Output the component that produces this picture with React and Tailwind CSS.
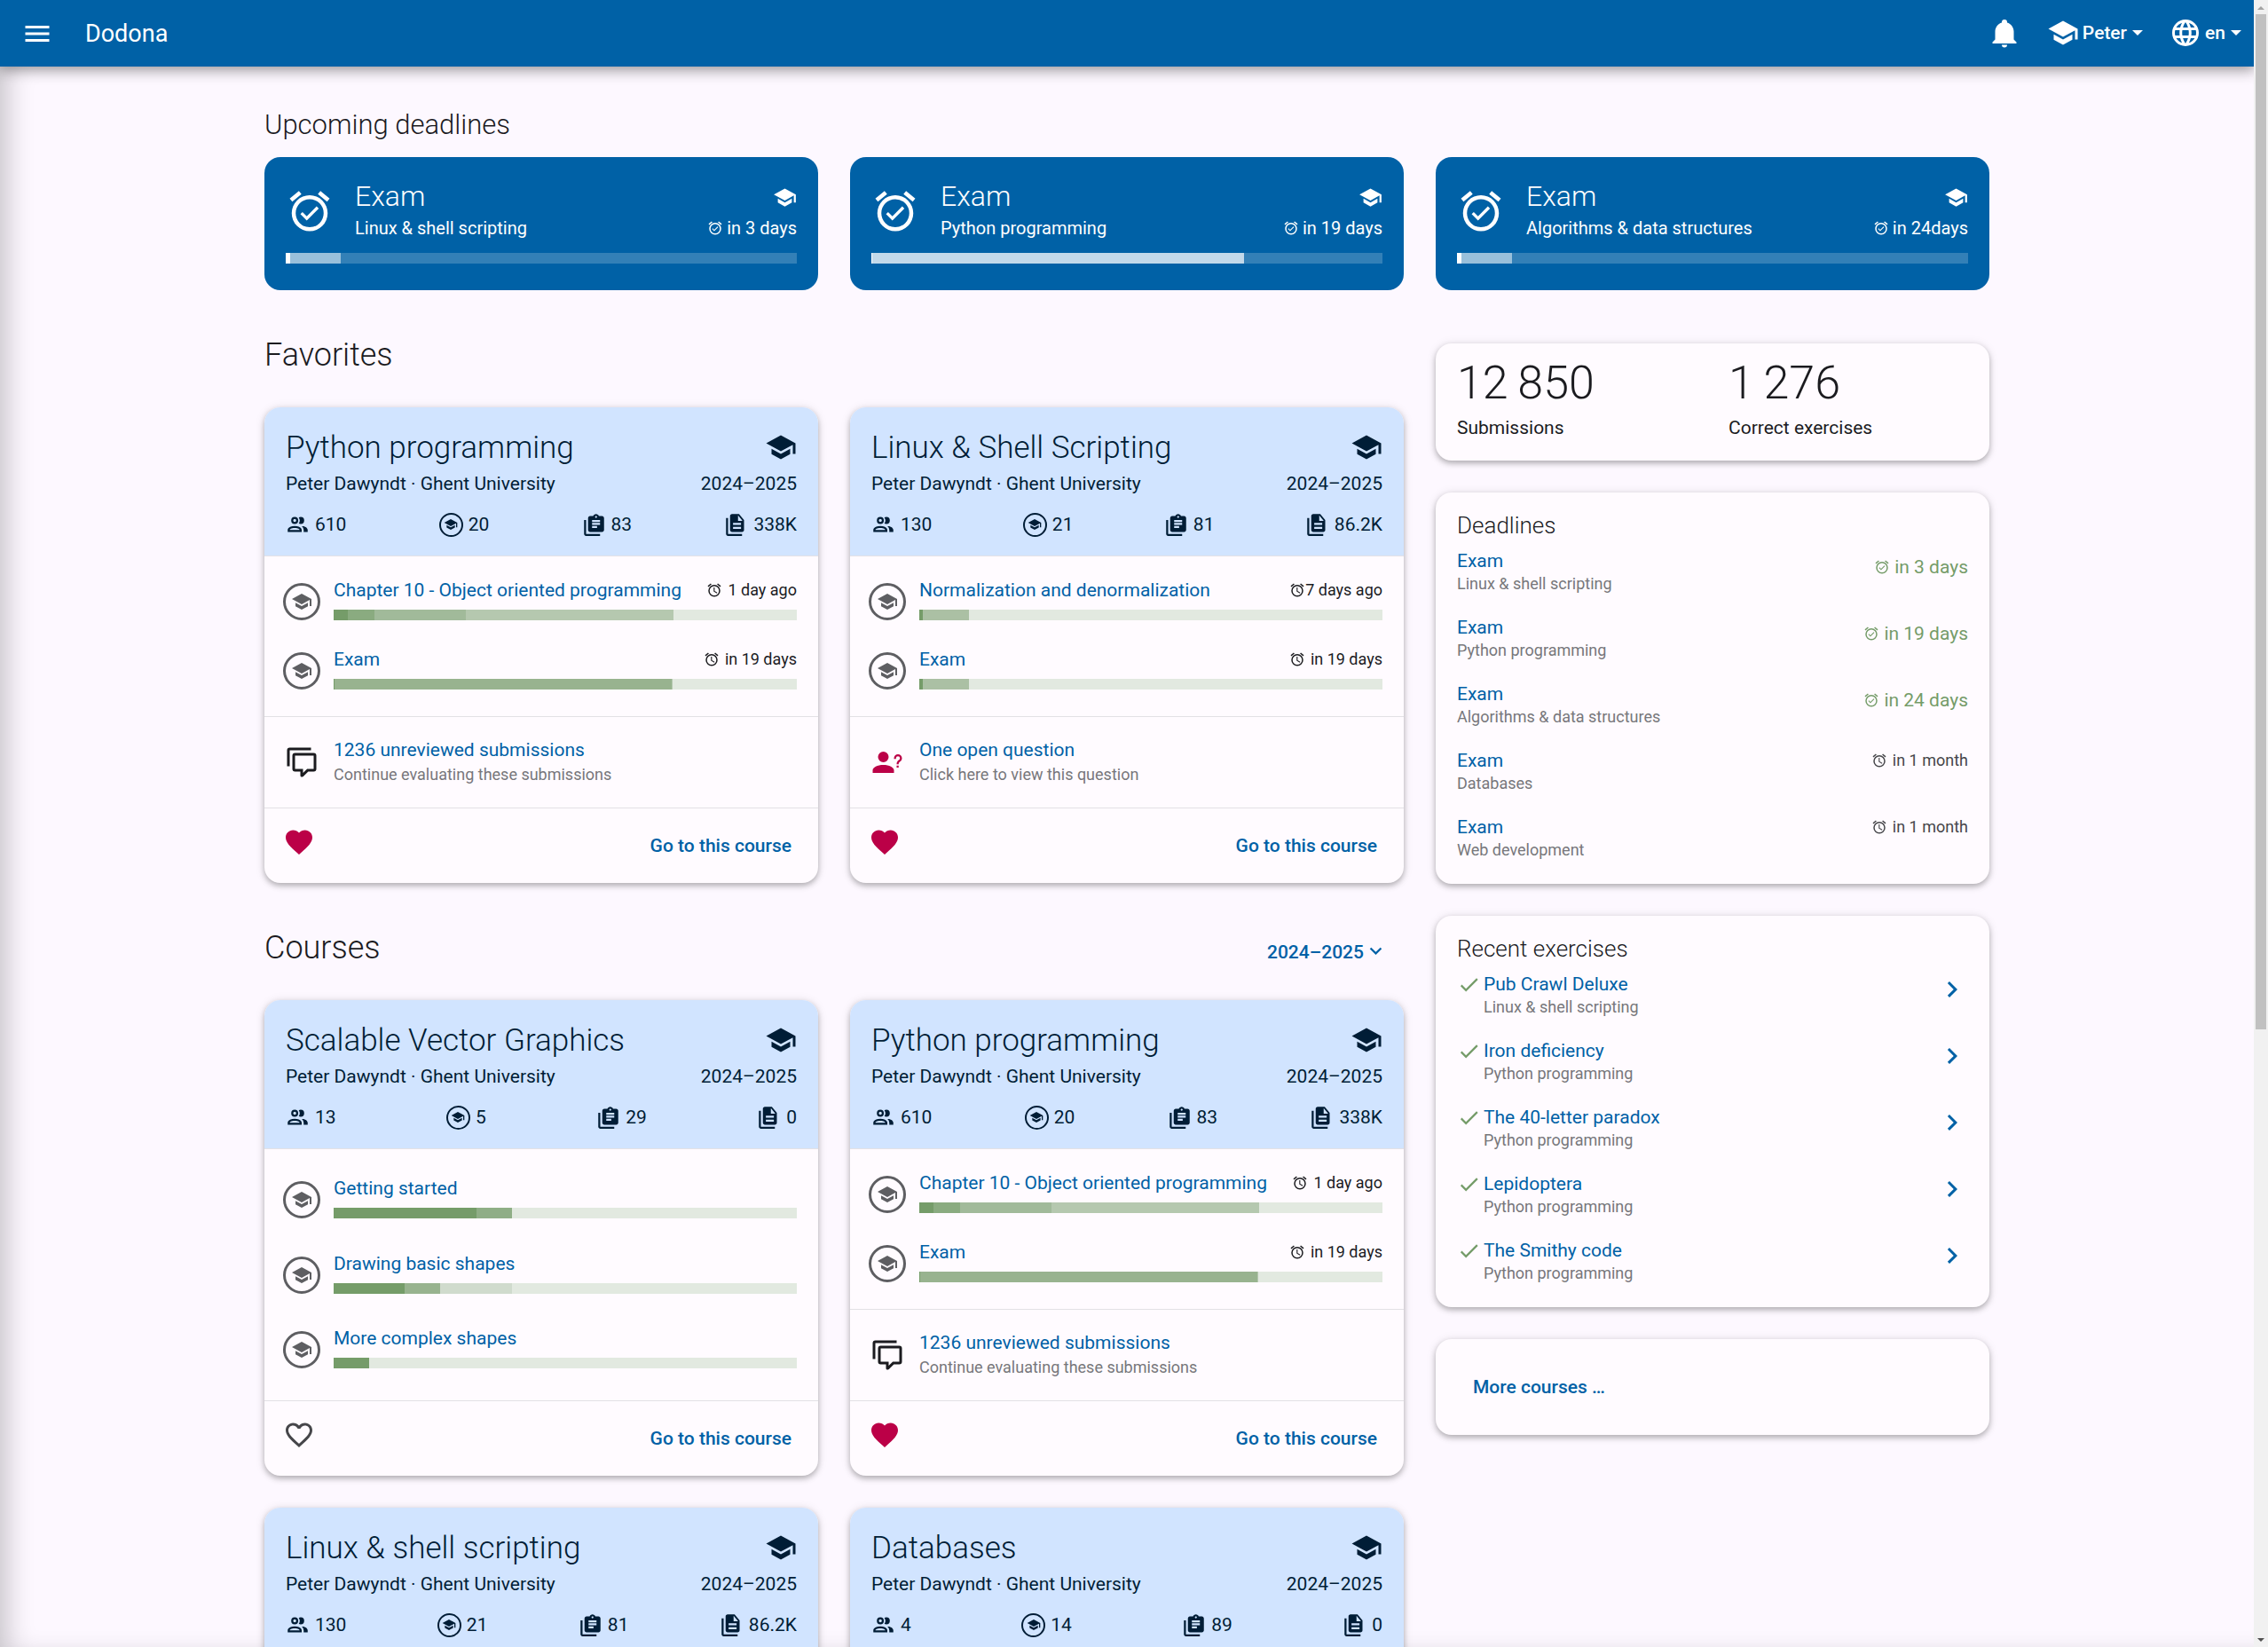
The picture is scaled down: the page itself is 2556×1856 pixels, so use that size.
import { useState } from 'react'
import clsx from 'clsx'

const ICONS = {
  menu: 'M3,6H21V8H3V6M3,11H21V13H3V11M3,16H21V18H3V16Z',
  school: 'M12,3L1,9L12,15L21,10.09V17H23V9M5,13.18V17.18L12,21L19,17.18V13.18L12,17L5,13.18Z',
  bell: 'M21,19V20H3V19L5,17V11C5,7.9 7.03,5.17 10,4.29C10,4.19 10,4.1 10,4A2,2 0 0,1 12,2A2,2 0 0,1 14,4C14,4.1 14,4.19 14,4.29C16.97,5.17 19,7.9 19,11V17L21,19M14,21A2,2 0 0,1 12,23A2,2 0 0,1 10,21',
  web: 'M16.36,14C16.44,13.34 16.5,12.68 16.5,12C16.5,11.32 16.44,10.66 16.36,10H19.74C19.9,10.64 20,11.31 20,12C20,12.69 19.9,13.36 19.74,14M14.59,19.56C15.19,18.45 15.65,17.25 15.97,16H18.92C17.96,17.65 16.43,18.93 14.59,19.56M14.34,14H9.66C9.56,13.34 9.5,12.68 9.5,12C9.5,11.32 9.56,10.65 9.66,10H14.34C14.43,10.65 14.5,11.32 14.5,12C14.5,12.68 14.43,13.34 14.34,14M12,19.96C11.17,18.76 10.5,17.43 10.09,16H13.91C13.5,17.43 12.83,18.76 12,19.96M8,8H5.08C6.03,6.34 7.57,5.06 9.4,4.44C8.8,5.55 8.35,6.75 8,8M5.08,16H8C8.35,17.25 8.8,18.45 9.4,19.56C7.57,18.93 6.03,17.65 5.08,16M4.26,14C4.1,13.36 4,12.69 4,12C4,11.31 4.1,10.64 4.26,10H7.64C7.56,10.66 7.5,11.32 7.5,12C7.5,12.68 7.56,13.34 7.64,14M12,4.03C12.83,5.23 13.5,6.57 13.91,8H10.09C10.5,6.57 11.17,5.23 12,4.03M18.92,8H15.97C15.65,6.75 15.19,5.55 14.59,4.44C16.43,5.07 17.96,6.34 18.92,8M12,2C6.47,2 2,6.5 2,12A10,10 0 0,0 12,22A10,10 0 0,0 22,12A10,10 0 0,0 12,2Z',
  alarm: 'M12,20A7,7 0 0,1 5,13A7,7 0 0,1 12,6A7,7 0 0,1 19,13A7,7 0 0,1 12,20M12,4A9,9 0 0,0 3,13A9,9 0 0,0 12,22A9,9 0 0,0 21,13A9,9 0 0,0 12,4M12.5,8H11V14L15.75,16.85L16.5,15.62L12.5,13.25V8M7.88,3.39L6.6,1.86L2,5.71L3.29,7.24L7.88,3.39M22,5.72L17.4,1.86L16.11,3.39L20.71,7.25L22,5.72Z',
  alarmCheck: 'M10.54,14.53L8.41,12.4L7.35,13.46L10.53,16.64L16.53,10.64L15.47,9.58L10.54,14.53M12,20A7,7 0 0,1 5,13A7,7 0 0,1 12,6A7,7 0 0,1 19,13A7,7 0 0,1 12,20M12,4A9,9 0 0,0 3,13A9,9 0 0,0 12,22A9,9 0 0,0 21,13A9,9 0 0,0 12,4M7.88,3.39L6.6,1.86L2,5.71L3.29,7.24L7.88,3.39M22,5.72L17.4,1.86L16.11,3.39L20.71,7.25L22,5.72Z',
  users: 'M13.07 10.41A5 5 0 0 0 13.07 4.59A3.39 3.39 0 0 1 15 4A3.5 3.5 0 0 1 15 11A3.39 3.39 0 0 1 13.07 10.41M5.5 7.5A3.5 3.5 0 1 1 9 11A3.5 3.5 0 0 1 5.5 7.5M7.5 7.5A1.5 1.5 0 1 0 9 6A1.5 1.5 0 0 0 7.5 7.5M16 17V19H2V17S2 13 9 13 16 17 16 17M14 17C13.86 16.22 12.67 15 9 15S4.07 16.31 4 17M15.95 13A5.32 5.32 0 0 1 18 17V19H22V17S22 13.37 15.94 13Z',
  exercises: 'M4 7V21H18V23H4C2.9 23 2 22.1 2 21V7H4M20 3C21.1 3 22 3.9 22 5V17C22 18.1 21.1 19 20 19H8C6.9 19 6 18.1 6 17V5C6 3.9 6.9 3 8 3H11.18C11.6 1.84 12.7 1 14 1C15.3 1 16.4 1.84 16.82 3H20M14 3C13.45 3 13 3.45 13 4C13 4.55 13.45 5 14 5C14.55 5 15 4.55 15 4C15 3.45 14.55 3 14 3M10 7V9H18V7M15 15V13H10V15M18 12V10H10V12',
  documents: 'M14 8H18.5L14 2.5V8M8 1H15L20 7V17C20 18.11 19.11 19 18 19H8C6.89 19 6 18.1 6 17V3C6 1.89 6.89 1 8 1M4 5V21H18V23H4C2.9 23 2 22.1 2 21V5H4M9 10V12H17V10H9M9 14V16H17V14H9Z',
  comments: 'M12,23A1,1 0 0,1 11,22V19H7A2,2 0 0,1 5,17V7A2,2 0 0,1 7,5H21A2,2 0 0,1 23,7V17A2,2 0 0,1 21,19H16.9L13.2,22.71C13,22.89 12.76,23 12.5,23H12M13,17V20.08L16.08,17H21V7H7V17H13M3,15H1V3A2,2 0 0,1 3,1H19V3H3V15Z',
  question: 'M13,8A4,4 0 0,1 9,12A4,4 0 0,1 5,8A4,4 0 0,1 9,4A4,4 0 0,1 13,8M17,18V20H1V18C1,15.79 4.58,14 9,14C13.42,14 17,15.79 17,18M20.5,14.5V16H19V14.5H20.5M18.5,9.5H17V9A3,3 0 0,1 20,6A3,3 0 0,1 23,9C23,9.97 22.5,10.88 21.71,11.41L21.41,11.6C20.84,12 20.5,12.61 20.5,13.3V13.5H19V13.3C19,12.11 19.6,11 20.59,10.35L20.88,10.16C21.27,9.9 21.5,9.47 21.5,9A1.5,1.5 0 0,0 20,7.5A1.5,1.5 0 0,0 18.5,9V9.5Z',
  heart: 'M12,21.35L10.55,20.03C5.4,15.36 2,12.27 2,8.5C2,5.41 4.42,3 7.5,3C9.24,3 10.91,3.81 12,5.08C13.09,3.81 14.76,3 16.5,3C19.58,3 22,5.41 22,8.5C22,12.27 18.6,15.36 13.45,20.03L12,21.35Z',
  heartOutline: 'M12.1,18.55L12,18.65L11.89,18.55C7.14,14.24 4,11.39 4,8.5C4,6.5 5.5,5 7.5,5C9.04,5 10.54,6 11.07,7.36H12.93C13.46,6 14.96,5 16.5,5C18.5,5 20,6.5 20,8.5C20,11.39 16.86,14.24 12.1,18.55M16.5,3C14.76,3 13.09,3.81 12,5.08C10.91,3.81 9.24,3 7.5,3C4.42,3 2,5.41 2,8.5C2,12.27 5.4,15.36 10.55,20.03L12,21.35L13.45,20.03C18.6,15.36 22,12.27 22,8.5C22,5.41 19.58,3 16.5,3Z',
  check: 'M21,7L9,19L3.5,13.5L4.91,12.09L9,16.17L19.59,5.59L21,7Z',
  chevronRight: 'M8.59,16.58L13.17,12L8.59,7.41L10,6L16,12L10,18L8.59,16.58Z',
  chevronDown: 'M7.41,8.58L12,13.17L16.59,8.58L18,10L12,16L6,10L7.41,8.58Z'
}

const upcoming = [
  { course: 'Linux & shell scripting', due: 'in 3 days', bar: [[0.8, 'bg-white'], [10, 'bg-white/50']] },
  { course: 'Python programming', due: 'in 19 days', bar: [[0.2, 'bg-white'], [72.8, 'bg-white/70']] },
  { course: 'Algorithms & data structures', due: 'in 24days', bar: [[0.8, 'bg-white'], [10, 'bg-white/50']] }
]

const pythonCourse = {
  title: 'Python programming',
  stats: ['610', '20', '83', '338K'],
  favorite: true,
  series: [
    {
      name: 'Chapter 10 - Object oriented programming',
      due: '1 day ago',
      bar: [[3.1, 'bg-[#759c69]'], [5.7, 'bg-[#8aab80]'], [19.8, 'bg-[#a1ba9a]'], [44.8, 'bg-[#b5c8af]']]
    },
    {
      name: 'Exam',
      due: 'in 19 days',
      bar: [[0.2, 'bg-[#759c69]'], [72.8, 'bg-[#98b38f]'], [0.2, 'bg-[#b5c8af]']]
    }
  ],
  action: { icon: 'comments', title: '1236 unreviewed submissions', text: 'Continue evaluating these submissions' }
}

const linuxBar = [[0.8, 'bg-[#759c69]'], [9.9, 'bg-[#abc0a4]']]

const favorites = [
  pythonCourse,
  {
    title: 'Linux & Shell Scripting',
    stats: ['130', '21', '81', '86.2K'],
    favorite: true,
    series: [
      { name: 'Normalization and denormalization', due: '7 days ago', tight: true, bar: linuxBar },
      { name: 'Exam', due: 'in 19 days', bar: linuxBar }
    ],
    action: { icon: 'question', title: 'One open question', text: 'Click here to view this question' }
  }
]

const courses = [
  {
    title: 'Scalable Vector Graphics',
    stats: ['13', '5', '29', '0'],
    series: [
      { name: 'Getting started', bar: [[30.9, 'bg-[#759c69]'], [7.7, 'bg-[#8fae86]']] },
      { name: 'Drawing basic shapes', bar: [[15.3, 'bg-[#759c69]'], [7.7, 'bg-[#98b38f]'], [15.5, 'bg-[#d0dbcd]']] },
      { name: 'More complex shapes', bar: [[7.7, 'bg-[#759c69]']] }
    ]
  },
  pythonCourse,
  {
    title: 'Linux & shell scripting',
    stats: ['130', '21', '81', '86.2K'],
    series: []
  },
  {
    title: 'Databases',
    stats: ['4', '14', '89', '0'],
    series: []
  }
]

const deadlines = [
  { course: 'Linux & shell scripting', due: 'in 3 days', done: true },
  { course: 'Python programming', due: 'in 19 days', done: true },
  { course: 'Algorithms & data structures', due: 'in 24 days', done: true },
  { course: 'Databases', due: 'in 1 month' },
  { course: 'Web development', due: 'in 1 month' }
]

const recent = [
  { name: 'Pub Crawl Deluxe', course: 'Linux & shell scripting' },
  { name: 'Iron deficiency', course: 'Python programming' },
  { name: 'The 40-letter paradox', course: 'Python programming' },
  { name: 'Lepidoptera', course: 'Python programming' },
  { name: 'The Smithy code', course: 'Python programming' }
]

function Icon({ name, className }) {
  return (
    <svg viewBox="0 0 24 24" fill="currentColor" aria-hidden="true" className={clsx('shrink-0', className)}>
      <path d={ICONS[name]} />
    </svg>
  )
}

function Caret() {
  return (
    <svg viewBox="0 0 12 6" fill="currentColor" aria-hidden="true" className="w-3 h-1.5 ml-0.5 shrink-0">
      <path d="M0 0H12L6 6Z" />
    </svg>
  )
}

function Progress({ segments, track }) {
  return (
    <div className={clsx('flex h-3', track)}>
      {segments.map(([width, color], i) => (
        <div key={i} className={color} style={{ width: `${width}%` }} />
      ))}
    </div>
  )
}

function Card({ className, children }) {
  return (
    <section className={clsx('rounded-[18px] bg-[#fffbff] overflow-hidden shadow-[0_3px_6px_rgba(0,0,0,0.26),0_1px_12px_rgba(0,0,0,0.1)]', className)}>
      {children}
    </section>
  )
}

function Navbar() {
  return (
    <header className="relative z-10 h-[75px] shrink-0 flex items-center bg-[#0061a6] text-white pl-6 pr-3.5 shadow-[0_3px_15px_rgba(0,0,0,0.4)]">
      <button aria-label="Menu">
        <Icon name="menu" className="size-9" />
      </button>
      <a href="#" className="ml-9 text-[27px] leading-9">Dodona</a>
      <nav className="ml-auto pb-0.5 flex items-center gap-[30px] text-[21px] leading-[30px] font-medium">
        <button aria-label="Notifications">
          <Icon name="bell" className="size-9" />
        </button>
        <button className="flex items-center gap-1">
          <Icon name="school" className="size-9" />
          <span>Peter</span>
          <Caret />
        </button>
        <button className="flex items-center gap-1">
          <Icon name="web" className="size-9" />
          <span>en</span>
          <Caret />
        </button>
      </nav>
    </header>
  )
}

function UpcomingCard({ item }) {
  return (
    <article className="rounded-[18px] bg-[#0061a6] text-white px-6 pt-6 pb-[30px]">
      <div className="flex">
        <Icon name="alarmCheck" className="size-[54px] mt-2.5" />
        <div className="ml-6 flex-1">
          <div className="flex items-end justify-between">
            <h3 className="text-[32px] leading-10 font-light">Exam</h3>
            <Icon name="school" className="size-[27px] mb-[5px]" />
          </div>
          <div className="mt-0.5 flex items-center justify-between text-[20px] leading-7">
            <span>{item.course}</span>
            <span className="flex items-center gap-1">
              <Icon name="alarmCheck" className="size-[18px]" />
              {item.due}
            </span>
          </div>
        </div>
      </div>
      <div className="mt-3.5">
        <Progress segments={item.bar} track="bg-white/20" />
      </div>
    </article>
  )
}

function Stat({ icon, value }) {
  return (
    <span className="flex items-center gap-1.5">
      {icon === 'school' ? (
        <span className="size-[27px] rounded-full border-2 border-current flex items-center justify-center">
          <Icon name="school" className="size-4" />
        </span>
      ) : (
        <Icon name={icon} className="size-[27px]" />
      )}
      {value}
    </span>
  )
}

function SeriesRow({ series }) {
  return (
    <div className="h-[78px] pb-[18px] flex items-end gap-[15px]">
      <span className="size-[42px] shrink-0 rounded-full border-3 border-[#5e5e62] text-[#5e5e62] flex items-center justify-center">
        <Icon name="school" className="size-6" />
      </span>
      <div className="flex-1">
        <div className="flex items-center justify-between leading-[30px]">
          <a href="#" className="text-[21px] text-[#0061a6]">{series.name}</a>
          {series.due && (
            <span className={clsx('flex items-center text-[18px]', !series.tight && 'gap-1.5')}>
              <Icon name="alarm" className="size-[18px]" />
              {series.due}
            </span>
          )}
        </div>
        <div className="mt-[7px]">
          <Progress segments={series.bar} track="bg-[#e2e9e0]" />
        </div>
      </div>
    </div>
  )
}

function CourseCard({ course }) {
  const [favorite, setFavorite] = useState(Boolean(course.favorite))
  const icons = ['users', 'school', 'exercises', 'documents']

  return (
    <Card className="flex flex-col">
      <div className="bg-[#d1e4ff] text-[#001d36] px-6 pt-6 pb-5 border-b border-[#e3e1e5] text-[21px] leading-[30px]">
        <div className="flex items-start justify-between">
          <h3 className="text-[35px] leading-11 font-light">{course.title}</h3>
          <Icon name="school" className="size-9 mt-[3px]" />
        </div>
        <div className="mt-[3px] flex justify-between">
          <span>Peter Dawyndt · Ghent University</span>
          <span>2024–2025</span>
        </div>
        <div className="mt-4 flex justify-between">
          {course.stats.map((value, i) => (
            <Stat key={icons[i]} icon={icons[i]} value={value} />
          ))}
        </div>
      </div>

      <div className="flex-1 flex flex-col justify-evenly py-3 pl-[21px] pr-6">
        {course.series.map(s => (
          <SeriesRow key={s.name} series={s} />
        ))}
      </div>

      {course.action && (
        <div className="flex items-center gap-[15px] border-t border-[#e3e1e5] py-6 pl-[21px] pr-6">
          <span className="w-[42px] flex justify-center">
            <Icon name={course.action.icon} className={clsx('size-9', course.action.icon === 'question' && 'text-[#bb0047]')} />
          </span>
          <div className="leading-[27px]">
            <a href="#" className="block text-[21px] text-[#0061a6]">{course.action.title}</a>
            <p className="text-[18px] text-[#77777b]">{course.action.text}</p>
          </div>
        </div>
      )}

      <div className="flex items-start justify-between border-t border-[#e3e1e5] h-[85px] pt-5 pl-[21px] pr-[30px]">
        <button aria-label="Favorite" aria-pressed={favorite} onClick={() => setFavorite(!favorite)}>
          <Icon name={favorite ? 'heart' : 'heartOutline'} className={clsx('size-9', favorite ? 'text-[#bb0047]' : 'text-[#46464a]')} />
        </button>
        <a href="#" className="mt-[7px] text-[21px] leading-[30px] font-medium text-[#0061a6]">Go to this course</a>
      </div>
    </Card>
  )
}

function Sidebar() {
  return (
    <aside className="pt-[9px] flex flex-col gap-9">
      <Card className="grid grid-cols-2 px-6 pt-[15px] pb-[22px]">
        <div>
          <p className="text-[52px] leading-[60px] font-light">12{'\u2009'}850</p>
          <p className="mt-[5px] text-[21px] leading-[30px]">Submissions</p>
        </div>
        <div className="pl-[18px]">
          <p className="text-[52px] leading-[60px] font-light">1{'\u2009'}276</p>
          <p className="mt-[5px] text-[21px] leading-[30px]">Correct exercises</p>
        </div>
      </Card>

      <Card className="px-6 pt-[19px] pb-[3px]">
        <h3 className="mb-2 text-[26px] leading-9 font-light">Deadlines</h3>
        {deadlines.map(d => (
          <div key={d.course} className="h-[75px] flex items-start justify-between">
            <div>
              <a href="#" className="block text-[21px] leading-7 text-[#0061a6]">Exam</a>
              <p className="text-[18px] leading-6 text-[#77777b]">{d.course}</p>
            </div>
            {d.done ? (
              <span className="mt-[7px] flex items-center gap-[5px] text-[21px] leading-7 text-[#759c69]">
                <Icon name="alarmCheck" className="size-[18px]" />
                {d.due}
              </span>
            ) : (
              <span className="flex items-center gap-1.5 text-[18px] leading-7 text-[#46464a]">
                <Icon name="alarm" className="size-[18px]" />
                {d.due}
              </span>
            )}
          </div>
        ))}
      </Card>

      <Card className="px-6 pt-[19px] pb-[3px]">
        <h3 className="mb-2 text-[26px] leading-9 font-light">Recent exercises</h3>
        {recent.map(r => (
          <div key={r.name} className="h-[75px] flex items-start">
            <Icon name="check" className="size-[27px] text-[#759c69] mt-px" />
            <div className="ml-[3px]">
              <a href="#" className="block text-[21px] leading-7 text-[#0061a6]">{r.name}</a>
              <p className="text-[18px] leading-6 text-[#77777b]">{r.course}</p>
            </div>
            <a href="#" aria-label={r.name} className="ml-auto mt-0.5 text-[#0061a6]">
              <Icon name="chevronRight" className="size-9" />
            </a>
          </div>
        ))}
      </Card>

      <Card className="px-[42px] py-[39px]">
        <a href="#" className="block text-[21px] leading-[30px] font-medium text-[#0061a6]">More courses …</a>
      </Card>
    </aside>
  )
}

function Dashboard() {
  return (
    <main className="mx-auto w-full max-w-[1944px] pt-[46px]">
      <h2 className="mb-4 text-[31px] leading-10 font-light">Upcoming deadlines</h2>
      <div className="grid grid-cols-3 gap-9">
        {upcoming.map(item => (
          <UpcomingCard key={item.course} item={item} />
        ))}
      </div>

      <div className="mt-[51px] grid grid-cols-3 gap-9">
        <div className="col-span-2">
          <h2 className="mb-[37px] text-[36px] leading-11 font-light">Favorites</h2>
          <div className="grid grid-cols-2 gap-9">
            {favorites.map(course => (
              <CourseCard key={course.title} course={course} />
            ))}
          </div>

          <div className="mt-[51px] mb-[37px] flex items-center justify-between">
            <h2 className="text-[36px] leading-11 font-light">Courses</h2>
            <div className="relative mr-6 mt-2.5 text-[#0061a6]">
              <select aria-label="Academic year" defaultValue="2024" className="appearance-none bg-transparent pr-[21px] text-[21px] leading-[30px] font-medium">
                <option value="2024">2024–2025</option>
                <option value="2023">2023–2024</option>
              </select>
              <Icon name="chevronDown" className="absolute -right-1.5 top-0 size-[27px] pointer-events-none" />
            </div>
          </div>
          <div className="grid grid-cols-2 gap-9">
            {courses.map(course => (
              <CourseCard key={course.title} course={course} />
            ))}
          </div>
        </div>
        <Sidebar />
      </div>
    </main>
  )
}

// Always visible page scrollbar
function Scrollbar() {
  return (
    <div aria-hidden="true" className="w-4 shrink-0 bg-[#f1f1f1] flex flex-col items-center">
      <svg viewBox="0 0 16 16" className="size-4" fill="#a3a3a3">
        <path d="M4 11L8 7L12 11Z" />
      </svg>
      <div className="w-3 flex-1">
        <div className="h-[62.7%] bg-[#c1c1c1]" />
      </div>
      <svg viewBox="0 0 16 16" className="size-4" fill="#505050">
        <path d="M4 6L8 10L12 6Z" />
      </svg>
    </div>
  )
}

export default function App() {
  return (
    <div className="h-screen flex overflow-hidden bg-[#fdf8ff] text-[#1b1b1f] font-['Roboto',sans-serif]">
      <div className="flex-1 flex flex-col overflow-hidden">
        <Navbar />
        <div className="flex-1 min-h-0 overflow-hidden shadow-[inset_20px_0_30px_-12px_rgba(0,0,0,0.22)]">
          <Dashboard />
        </div>
      </div>
      <Scrollbar />
    </div>
  )
}
